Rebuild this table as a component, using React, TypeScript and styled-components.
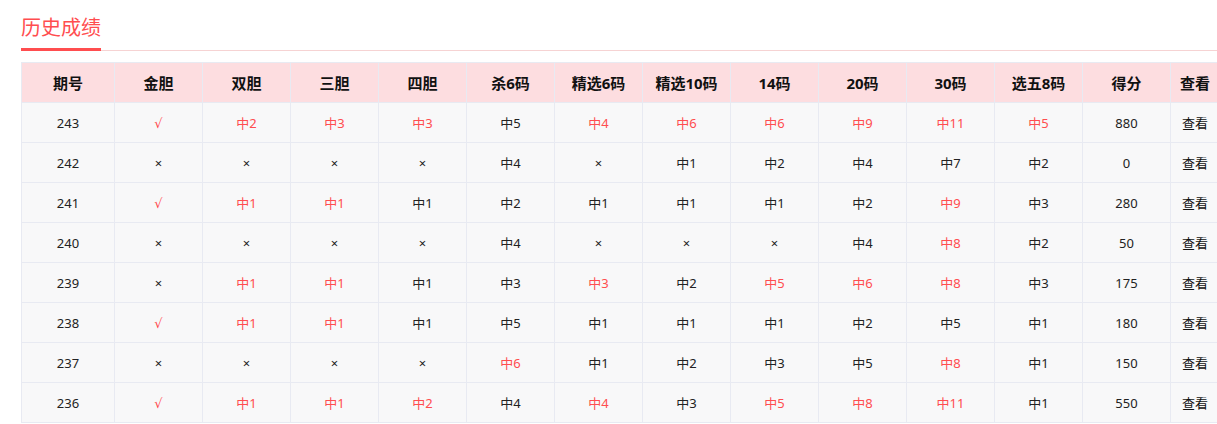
import React from "react";
import styled, { createGlobalStyle } from "styled-components";

const GlobalStyle = createGlobalStyle`
  body {
    margin: 0;
    background: #fff;
    overflow: hidden;
    font-family: "Noto Sans", "DejaVu Sans", "Noto Sans CJK SC", sans-serif;
  }
`;

const headers = [
  "期号",
  "金胆",
  "双胆",
  "三胆",
  "四胆",
  "杀6码",
  "精选6码",
  "精选10码",
  "14码",
  "20码",
  "30码",
  "选五8码",
  "得分",
  "查看",
];

// a leading "!" marks a hit shown in red
const rows: string[][] = [
  ["243", "!√", "!中2", "!中3", "!中3", "中5", "!中4", "!中6", "!中6", "!中9", "!中11", "!中5", "880"],
  ["242", "×", "×", "×", "×", "中4", "×", "中1", "中2", "中4", "中7", "中2", "0"],
  ["241", "!√", "!中1", "!中1", "中1", "中2", "中1", "中1", "中1", "中2", "!中9", "中3", "280"],
  ["240", "×", "×", "×", "×", "中4", "×", "×", "×", "中4", "!中8", "中2", "50"],
  ["239", "×", "!中1", "!中1", "中1", "中3", "!中3", "中2", "!中5", "!中6", "!中8", "中3", "175"],
  ["238", "!√", "!中1", "!中1", "中1", "中5", "中1", "中1", "中1", "中2", "中5", "中1", "180"],
  ["237", "×", "×", "×", "×", "!中6", "中1", "中2", "中3", "中5", "!中8", "中1", "150"],
  ["236", "!√", "!中1", "!中1", "!中2", "中4", "!中4", "中3", "!中5", "!中8", "!中11", "中1", "550"],
];

const Page = styled.div`
  padding: 13px 0 0 21px;
`;

const TitleBar = styled.div`
  display: flex;
  border-bottom: 1px solid #f6d3d3;
`;

const Title = styled.h2`
  margin: 0 0 -1px;
  padding-bottom: 8px;
  font-family: "Noto Sans CJK SC", sans-serif;
  font-size: 20px;
  line-height: 27px;
  font-weight: normal;
  color: #ff4d4f;
  border-bottom: 3px solid #ff4d4f;
`;

const Table = styled.table`
  margin-top: 11px;
  width: 1198px;
  border-collapse: collapse;
  table-layout: fixed;
`;

const Col = styled.col<{ $w: number }>`
  width: ${(p) => p.$w}px;
`;

const Th = styled.th`
  height: 39px;
  padding: 0;
  background: #fddde0;
  border: 1px solid #e8eaf2;
  font-size: 15px;
  font-weight: bold;
  color: #111;
  text-align: center;
`;

const Td = styled.td<{ $hit?: boolean }>`
  height: 39px;
  padding: 0;
  background: #f8f8f9;
  border: 1px solid #e8eaf2;
  font-size: 13px;
  color: ${(p) => (p.$hit ? "#ff4d4f" : "#222")};
  text-align: center;
`;

const ViewLink = styled.span`
  color: #111;
  cursor: pointer;
`;

const App: React.FC = () => {
  const widths = [93, ...Array(12).fill(88), 49];
  return (
    <Page>
      <GlobalStyle />
      <TitleBar>
        <Title>历史成绩</Title>
      </TitleBar>
      <Table>
        <colgroup>
          {widths.map((w, i) => (
            <Col key={i} $w={w} />
          ))}
        </colgroup>
        <thead>
          <tr>
            {headers.map((h) => (
              <Th key={h}>{h}</Th>
            ))}
          </tr>
        </thead>
        <tbody>
          {rows.map((row) => (
            <tr key={row[0]}>
              {row.map((cell, i) => {
                const hit = cell.startsWith("!");
                return (
                  <Td key={i} $hit={hit}>
                    {hit ? cell.slice(1) : cell}
                  </Td>
                );
              })}
              <Td>
                <ViewLink>查看</ViewLink>
              </Td>
            </tr>
          ))}
        </tbody>
      </Table>
    </Page>
  );
};

export default App;
